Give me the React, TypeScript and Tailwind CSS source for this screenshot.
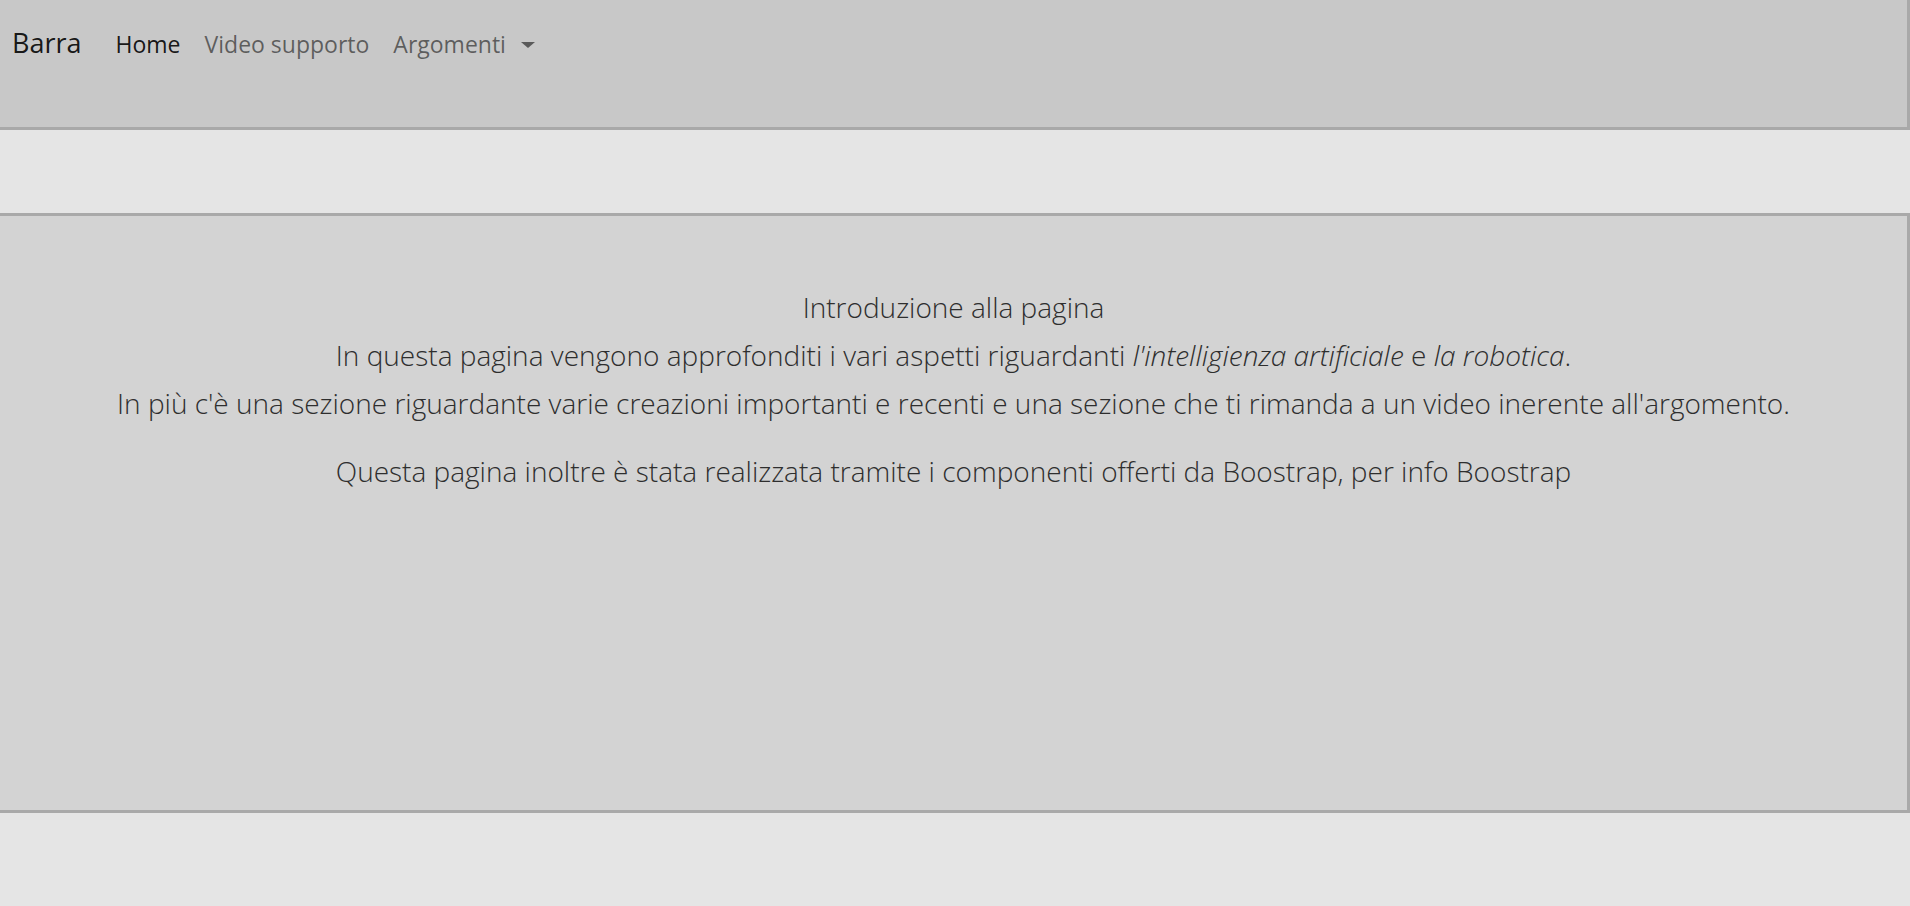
const navLinks = ["Home", "Video supporto"];

const App = () => {
  return (
    <div
      className="min-h-[906px] bg-[#e5e5e5]"
      style={{ fontFamily: '"Open Sans", "Noto Sans", sans-serif' }}
    >
      <nav className="h-[130px] bg-[#c8c8c8] border-b-[3px] border-r-[3px] border-[#a9a9a9] flex items-start pl-3 pt-[23px]">
        <a className="text-[27px] leading-[40px] text-black/90 mr-[34px]">Barra</a>
        <ul className="flex items-center gap-[24px] pt-[3px] text-[23px] leading-[36px]">
          {navLinks.map((link, i) => (
            <li key={link} className={i === 0 ? "text-black/90" : "text-black/55"}>
              {link}
            </li>
          ))}
          <li className="flex items-center text-black/55">
            Argomenti
            <span className="ml-[15px] mt-[2px] w-0 h-0 border-l-[7px] border-r-[7px] border-t-[6px] border-l-transparent border-r-transparent border-t-[#5a5a5a]" />
          </li>
        </ul>
      </nav>

      <div className="h-[83px]" />

      <main className="h-[600px] bg-[#d3d3d3] border-y-[3px] border-r-[3px] border-[#a9a9a9] pt-[67px] text-center text-[#2e2e2e] font-light text-[28px]">
        <p className="leading-[48px]">
          Introduzione alla pagina
          <br />
          In questa pagina vengono approfonditi i vari aspetti riguardanti{" "}
          <em>l'intelligienza artificiale</em> e <em>la robotica</em>.
          <br />
          In più c'è una sezione riguardante varie creazioni importanti e recenti e una sezione che ti rimanda a un video inerente all'argomento.
        </p>
        <p className="leading-[48px] mt-[20px]">
          Questa pagina inoltre è stata realizzata tramite i componenti offerti da Boostrap, per info Boostrap
        </p>
      </main>
    </div>
  );
};

export default App;
